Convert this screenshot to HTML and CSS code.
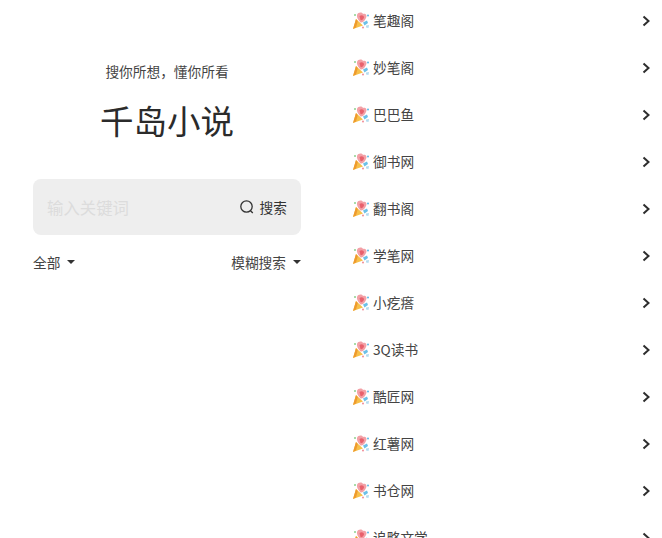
FILE: index.html
```html
<!DOCTYPE html>
<html lang="zh-CN">
<head>
    <meta charset="UTF-8">
    <meta name="viewport" content="width=device-width, initial-scale=1.0">
    <title>千岛小说</title>
    <link rel="stylesheet" href="styles.css">
</head>
<body>
    <svg class="defs" width="0" height="0">
        <symbol id="popper" viewBox="0 0 18 18">
            <path d="M4 7 L11 13.500 L1 17 Z" fill="#f7c04a"/>
            <path d="M4 7 L5.800 9 L4 15.500 L1 17 Z" fill="#ee9a2e"/>
            <path d="M5 3 C6 0 10 0 11 2 C13.500 1 15.500 3.500 14 6 C13 8.500 10.500 11 8.500 10.500 C6.500 8.500 4.500 5.500 5 3 Z" fill="#f3a0a6"/>
            <path d="M7.500 4 C9 2.500 12 3 12 5.500 C11.500 7.500 9.500 8.500 8.500 8 Z" fill="#e8606c"/>
            <path d="M11 10.500 L15 8.500 L16 11 L12.500 13.500 Z" fill="#6cc0e8"/>
            <path d="M14 13.500 L17 13 L16.500 16 L14 15.500 Z" fill="#b5dcf0"/>
            <circle cx="3" cy="3" r="1" fill="#8ccf8c"/>
            <circle cx="16" cy="3.500" r="1" fill="#5cb8e6"/>
            <circle cx="11" cy="15.500" r=".9" fill="#f0808c"/>
        </symbol>
        <symbol id="chevron" viewBox="0 0 10 12">
            <path d="M2.500 1.500 L7.500 6 L2.500 10.500" fill="none" stroke="#2e2e2e" stroke-width="2"/>
        </symbol>
    </svg>

    <main class="page">
        <section class="search-panel">
            <p class="slogan">搜你所想，懂你所看</p>
            <h1 class="brand">千岛小说</h1>
            <div class="search-box">
                <span class="placeholder">输入关键词</span>
                <span class="search-btn">
                    <svg class="search-icon" viewBox="0 0 16 16" width="16" height="16">
                        <circle cx="7.500" cy="7.500" r="5.700" fill="none" stroke="#333" stroke-width="1.300"/>
                        <path d="M11.500 11.700 L13.800 14" stroke="#333" stroke-width="1.300" fill="none"/>
                    </svg>
                    搜索
                </span>
            </div>
            <div class="filters">
                <span class="filter">全部<i class="caret"></i></span>
                <span class="filter">模糊搜索<i class="caret"></i></span>
            </div>
        </section>

        <ul class="site-list">
            <li class="site"><svg class="popper"><use href="#popper"/></svg><span class="site-name">笔趣阁</span><svg class="chevron"><use href="#chevron"/></svg></li>
            <li class="site"><svg class="popper"><use href="#popper"/></svg><span class="site-name">妙笔阁</span><svg class="chevron"><use href="#chevron"/></svg></li>
            <li class="site"><svg class="popper"><use href="#popper"/></svg><span class="site-name">巴巴鱼</span><svg class="chevron"><use href="#chevron"/></svg></li>
            <li class="site"><svg class="popper"><use href="#popper"/></svg><span class="site-name">御书网</span><svg class="chevron"><use href="#chevron"/></svg></li>
            <li class="site"><svg class="popper"><use href="#popper"/></svg><span class="site-name">翻书阁</span><svg class="chevron"><use href="#chevron"/></svg></li>
            <li class="site"><svg class="popper"><use href="#popper"/></svg><span class="site-name">学笔网</span><svg class="chevron"><use href="#chevron"/></svg></li>
            <li class="site"><svg class="popper"><use href="#popper"/></svg><span class="site-name">小疙瘩</span><svg class="chevron"><use href="#chevron"/></svg></li>
            <li class="site"><svg class="popper"><use href="#popper"/></svg><span class="site-name">3Q读书</span><svg class="chevron"><use href="#chevron"/></svg></li>
            <li class="site"><svg class="popper"><use href="#popper"/></svg><span class="site-name">酷匠网</span><svg class="chevron"><use href="#chevron"/></svg></li>
            <li class="site"><svg class="popper"><use href="#popper"/></svg><span class="site-name">红薯网</span><svg class="chevron"><use href="#chevron"/></svg></li>
            <li class="site"><svg class="popper"><use href="#popper"/></svg><span class="site-name">书仓网</span><svg class="chevron"><use href="#chevron"/></svg></li>
            <li class="site"><svg class="popper"><use href="#popper"/></svg><span class="site-name">追略文学</span><svg class="chevron"><use href="#chevron"/></svg></li>
        </ul>
    </main>
</body>
</html>
```

FILE: styles.css
```css
html, body {
    height: 100%;
    margin: 0;
    overflow: hidden;
}
body {
    background-color: #fff;
    color: #333;
    font-family: "Noto Sans CJK SC", "Noto Sans", sans-serif;
}
.defs {
    display: block;
    height: 0;
}
.page {
    display: flex;
    height: 538px;
    overflow: hidden;
}
.search-panel {
    width: 268px;
    margin-left: 33px;
    padding-top: 61px;
    text-align: center;
}
.slogan {
    margin: 0;
    font-size: 13.7px;
    line-height: 20px;
    color: #444;
}
.brand {
    margin: 17px 0 0;
    font-size: 33.5px;
    line-height: 44px;
    font-weight: 400;
    color: #2b2b2b;
}
.search-box {
    display: flex;
    align-items: center;
    justify-content: space-between;
    height: 56px;
    margin-top: 37px;
    padding: 0 14px;
    background-color: #eeeeee;
    border-radius: 8px;
}
.placeholder {
    font-size: 16.4px;
    color: #dcdcdc;
}
.search-btn {
    display: flex;
    align-items: center;
    gap: 5px;
    font-size: 13.7px;
    color: #333;
}
.filters {
    display: flex;
    justify-content: space-between;
    margin-top: 17px;
    font-size: 13.7px;
    line-height: 20px;
    color: #444;
}
.filter {
    display: flex;
    align-items: center;
    gap: 7px;
}
.caret {
    width: 0;
    height: 0;
    border-left: 4px solid transparent;
    border-right: 4px solid transparent;
    border-top: 4px solid #333;
}
.site-list {
    flex: 1;
    margin: -3px 0 0;
    padding: 0 11px 0 51px;
    list-style: none;
}
.site {
    display: flex;
    align-items: center;
    height: 47px;
}
.popper {
    width: 18px;
    height: 18px;
    flex-shrink: 0;
}
.site-name {
    flex: 1;
    margin: 0 0 2px 3px;
    font-size: 13.7px;
    color: #444;
}
.chevron {
    width: 10px;
    height: 12px;
}
```
